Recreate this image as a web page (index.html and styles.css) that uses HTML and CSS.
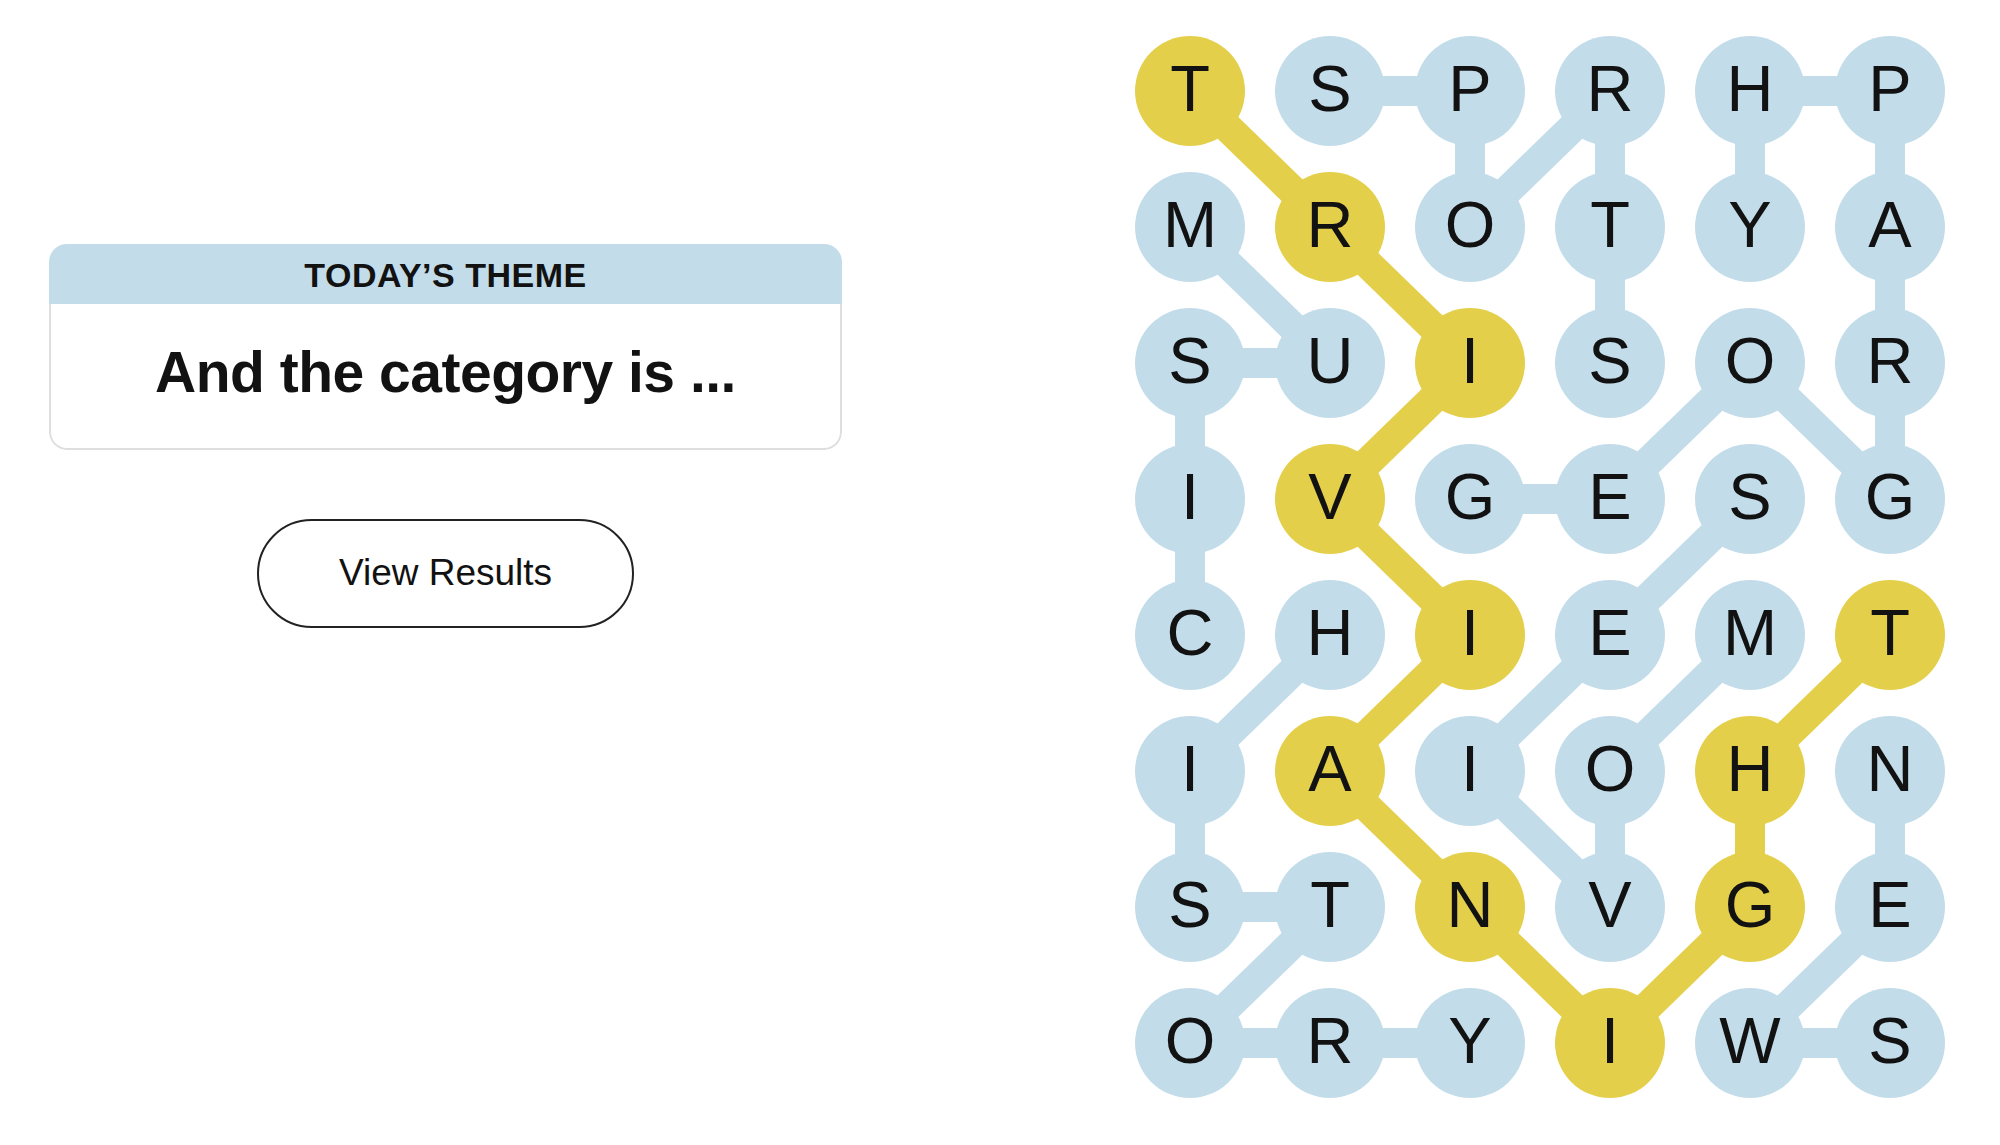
FILE: index.html
```html
<!DOCTYPE html>
<html lang="en">
<head>
<meta charset="utf-8">
<title>Strands</title>
<link rel="stylesheet" href="styles.css">
</head>
<body>
<main class="page">
  <section class="side">
    <div class="theme-card">
      <div class="theme-head">TODAY’S THEME</div>
      <div class="theme-body"><h1 class="theme-title">And the category is ...</h1></div>
    </div>
    <button class="results-btn" type="button">View Results</button>
  </section>

  <section class="board">
    <svg class="links" width="840" height="1088" viewBox="0 0 840 1088" aria-hidden="true">
      <g class="blue">
        <line x1="210" y1="68" x2="350" y2="68"/>
        <line x1="350" y1="68" x2="350" y2="204"/>
        <line x1="350" y1="204" x2="490" y2="68"/>
        <line x1="490" y1="68" x2="490" y2="204"/>
        <line x1="490" y1="204" x2="490" y2="340"/>

        <line x1="350" y1="476" x2="490" y2="476"/>
        <line x1="490" y1="476" x2="630" y2="340"/>
        <line x1="630" y1="340" x2="770" y2="476"/>
        <line x1="770" y1="476" x2="770" y2="340"/>
        <line x1="770" y1="340" x2="770" y2="204"/>
        <line x1="770" y1="204" x2="770" y2="68"/>
        <line x1="770" y1="68" x2="630" y2="68"/>
        <line x1="630" y1="68" x2="630" y2="204"/>

        <line x1="70" y1="204" x2="210" y2="340"/>
        <line x1="210" y1="340" x2="70" y2="340"/>
        <line x1="70" y1="340" x2="70" y2="476"/>
        <line x1="70" y1="476" x2="70" y2="612"/>

        <line x1="210" y1="612" x2="70" y2="748"/>
        <line x1="70" y1="748" x2="70" y2="884"/>
        <line x1="70" y1="884" x2="210" y2="884"/>
        <line x1="210" y1="884" x2="70" y2="1020"/>
        <line x1="70" y1="1020" x2="210" y2="1020"/>
        <line x1="210" y1="1020" x2="350" y2="1020"/>

        <line x1="630" y1="612" x2="490" y2="748"/>
        <line x1="490" y1="748" x2="490" y2="884"/>
        <line x1="490" y1="884" x2="350" y2="748"/>
        <line x1="350" y1="748" x2="490" y2="612"/>
        <line x1="490" y1="612" x2="630" y2="476"/>

        <line x1="770" y1="748" x2="770" y2="884"/>
        <line x1="770" y1="884" x2="630" y2="1020"/>
        <line x1="630" y1="1020" x2="770" y2="1020"/>
      </g>
      <g class="gold">
        <line x1="70" y1="68" x2="210" y2="204"/>
        <line x1="210" y1="204" x2="350" y2="340"/>
        <line x1="350" y1="340" x2="210" y2="476"/>
        <line x1="210" y1="476" x2="350" y2="612"/>
        <line x1="350" y1="612" x2="210" y2="748"/>
        <line x1="210" y1="748" x2="350" y2="884"/>
        <line x1="350" y1="884" x2="490" y2="1020"/>
        <line x1="490" y1="1020" x2="630" y2="884"/>
        <line x1="630" y1="884" x2="630" y2="748"/>
        <line x1="630" y1="748" x2="770" y2="612"/>
      </g>
    </svg>

    <div class="cell"><span class="dot gold">T</span></div>
    <div class="cell"><span class="dot">S</span></div>
    <div class="cell"><span class="dot">P</span></div>
    <div class="cell"><span class="dot">R</span></div>
    <div class="cell"><span class="dot">H</span></div>
    <div class="cell"><span class="dot">P</span></div>

    <div class="cell"><span class="dot">M</span></div>
    <div class="cell"><span class="dot gold">R</span></div>
    <div class="cell"><span class="dot">O</span></div>
    <div class="cell"><span class="dot">T</span></div>
    <div class="cell"><span class="dot">Y</span></div>
    <div class="cell"><span class="dot">A</span></div>

    <div class="cell"><span class="dot">S</span></div>
    <div class="cell"><span class="dot">U</span></div>
    <div class="cell"><span class="dot gold">I</span></div>
    <div class="cell"><span class="dot">S</span></div>
    <div class="cell"><span class="dot">O</span></div>
    <div class="cell"><span class="dot">R</span></div>

    <div class="cell"><span class="dot">I</span></div>
    <div class="cell"><span class="dot gold">V</span></div>
    <div class="cell"><span class="dot">G</span></div>
    <div class="cell"><span class="dot">E</span></div>
    <div class="cell"><span class="dot">S</span></div>
    <div class="cell"><span class="dot">G</span></div>

    <div class="cell"><span class="dot">C</span></div>
    <div class="cell"><span class="dot">H</span></div>
    <div class="cell"><span class="dot gold">I</span></div>
    <div class="cell"><span class="dot">E</span></div>
    <div class="cell"><span class="dot">M</span></div>
    <div class="cell"><span class="dot gold">T</span></div>

    <div class="cell"><span class="dot">I</span></div>
    <div class="cell"><span class="dot gold">A</span></div>
    <div class="cell"><span class="dot">I</span></div>
    <div class="cell"><span class="dot">O</span></div>
    <div class="cell"><span class="dot gold">H</span></div>
    <div class="cell"><span class="dot">N</span></div>

    <div class="cell"><span class="dot">S</span></div>
    <div class="cell"><span class="dot">T</span></div>
    <div class="cell"><span class="dot gold">N</span></div>
    <div class="cell"><span class="dot">V</span></div>
    <div class="cell"><span class="dot gold">G</span></div>
    <div class="cell"><span class="dot">E</span></div>

    <div class="cell"><span class="dot">O</span></div>
    <div class="cell"><span class="dot">R</span></div>
    <div class="cell"><span class="dot">Y</span></div>
    <div class="cell"><span class="dot gold">I</span></div>
    <div class="cell"><span class="dot">W</span></div>
    <div class="cell"><span class="dot">S</span></div>
  </section>
</main>
</body>
</html>
```

FILE: styles.css
```css
* { box-sizing: border-box; }

html, body {
  margin: 0;
  padding: 0;
  background: #ffffff;
}

body {
  font-family: "Liberation Sans", Arial, sans-serif;
  color: #121212;
}

.page {
  display: flex;
  align-items: flex-start;
  width: 2000px;
  height: 1145px;
  overflow: hidden;
}

/* ---------- left column ---------- */
.side {
  width: 793px;
  margin-left: 49px;
  margin-top: 244px;
  display: flex;
  flex-direction: column;
  align-items: center;
}

.theme-card {
  width: 100%;
  border-radius: 18px;
  overflow: hidden;
}

.theme-head {
  height: 60px;
  background: #c3dcea;
  display: flex;
  align-items: center;
  justify-content: center;
  font-size: 34px;
  font-weight: 700;
  letter-spacing: 0.5px;
  padding-top: 2px;
}

.theme-body {
  height: 146px;
  border: 2px solid #dedede;
  border-top: none;
  border-radius: 0 0 18px 18px;
  display: flex;
  align-items: center;
  justify-content: center;
  padding-bottom: 8px;
}

.theme-title {
  margin: 0;
  font-size: 57px;
  font-weight: 700;
  letter-spacing: -0.5px;
  line-height: 1;
}

.results-btn {
  margin-top: 69px;
  width: 377px;
  height: 109px;
  border: 2px solid #222222;
  border-radius: 60px;
  background: #ffffff;
  color: #121212;
  font-family: "Liberation Sans", Arial, sans-serif;
  font-size: 37px;
  padding: 0 0 2px;
}

/* ---------- board ---------- */
.board {
  position: relative;
  margin-left: 278px;
  margin-top: 23px;
  display: grid;
  grid-template-columns: repeat(6, 140px);
  grid-template-rows: repeat(8, 136px);
}

.links {
  position: absolute;
  left: 0;
  top: 0;
  z-index: 0;
}

.links line {
  stroke-width: 30;
  stroke-linecap: butt;
}

.links .blue line { stroke: #c3dcea; }
.links .gold line { stroke: #e4cf4b; }

.cell {
  position: relative;
  z-index: 1;
  display: flex;
  align-items: center;
  justify-content: center;
}

.dot {
  width: 110px;
  height: 110px;
  border-radius: 50%;
  background: #c3dcea;
  display: flex;
  align-items: center;
  justify-content: center;
  font-size: 65px;
  line-height: 1;
  padding-bottom: 5px;
  color: #121212;
}

.dot.gold { background: #e4cf4b; }
```
